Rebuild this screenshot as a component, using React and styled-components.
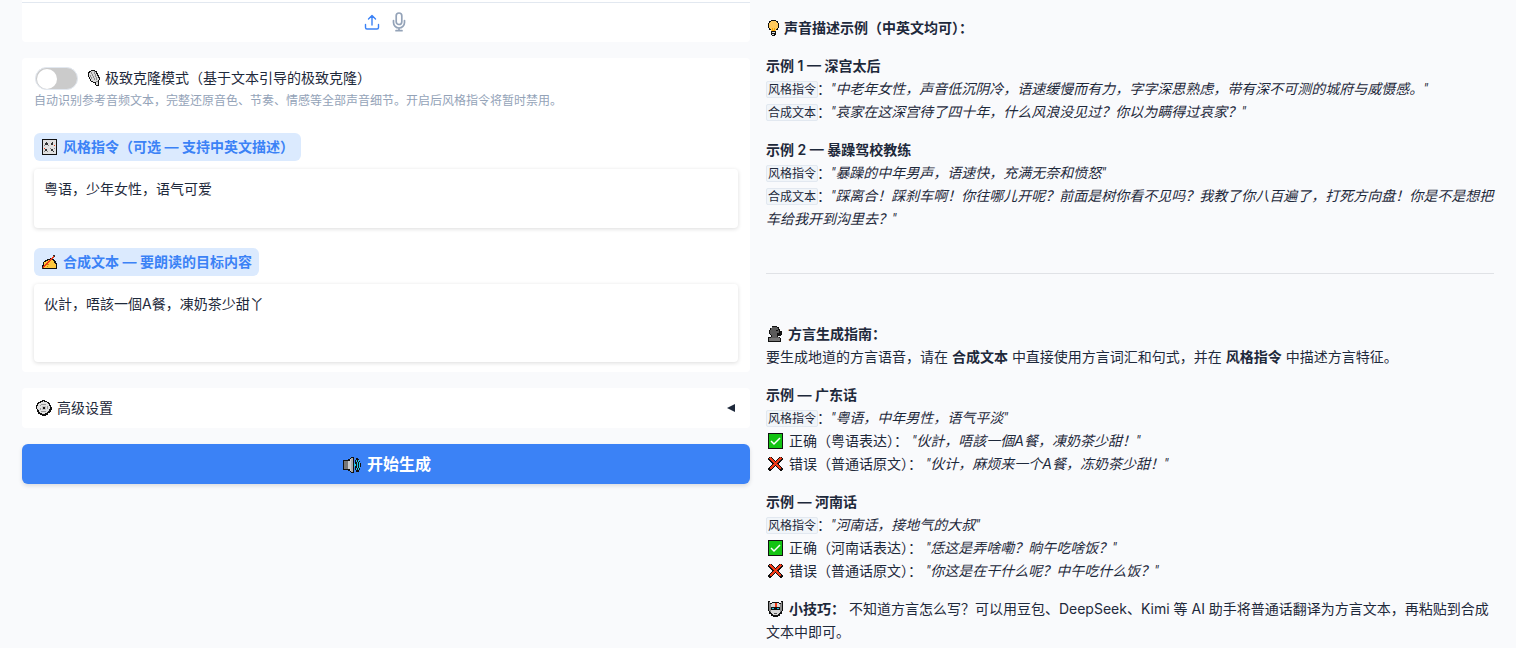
import React from 'react'
import styled, { createGlobalStyle } from 'styled-components'

const GlobalStyle = createGlobalStyle`
  * {
    box-sizing: border-box;
  }
  body {
    margin: 0;
    background: #f9fafc;
    color: #1e293b;
    font: 14px/23px Inter, 'Noto Sans CJK SC', sans-serif;
  }
`

const Page = styled.main`
  display: flex;
  align-items: flex-start;
  gap: 16px;
  padding: 0 22px;
`

const Column = styled.div`
  flex: 1 1 0;
  min-width: 0;
  display: flex;
  flex-direction: column;
  gap: 16px;
`

const AudioPanel = styled.section`
  height: 42px;
  padding-top: 2px;
  background: #fff;
  border-radius: 0 0 4px 4px;
`

const SourceBar = styled.div`
  display: flex;
  justify-content: center;
  gap: 8px;
  padding: 9px 2px 0 0;
  border-top: 1px solid #e2e8f0;
`

const SourceButton = styled.button`
  display: flex;
  padding: 0;
  border: 0;
  background: none;
  color: ${(props) => (props.$active ? '#3b82f6' : '#94a3b8')};
  cursor: pointer;
`

const Group = styled.section`
  padding: 8px 12px 10px;
  background: #fff;
  border-radius: 4px;
`

const SwitchLabel = styled.label`
  display: flex;
  align-items: center;
  gap: 8px;
  height: 24px;
  padding-left: 1px;
  line-height: 24px;
`

const Switch = styled.input`
  appearance: none;
  width: 43px;
  height: 23px;
  margin: 0;
  padding: 1px;
  border: 1px solid #e2e8f0;
  border-radius: 12px;
  background: #cbcbcb;
  cursor: pointer;

  &::before {
    content: '';
    display: block;
    width: 20px;
    height: 20px;
    border-radius: 50%;
    background: #fff;
  }
  &:checked {
    background: #3b82f6;
  }
  &:checked::before {
    margin-left: 19px;
  }
`

const Hint = styled.p`
  margin: 1px 0 0;
  color: #94a3b8;
  font-size: 12px;
  line-height: 20px;
`

const Field = styled.div`
  padding-top: ${(props) => props.$space}px;
`

const FieldLabel = styled.label`
  display: block;
  width: fit-content;
  padding: 0 7px 0 8px;
  border-radius: 6px;
  background: #dbeafe;
  color: #3b82f6;
  font-weight: 600;
  line-height: 28px;
`

const TextBox = styled.textarea`
  display: block;
  width: 100%;
  height: ${(props) => props.$height}px;
  margin-top: 8px;
  padding: 8px 10px;
  border: 0;
  border-radius: 4px;
  background: #fff;
  box-shadow: 0 1px 4px rgba(0, 0, 0, 0.14);
  color: inherit;
  font: inherit;
  resize: none;
  outline: none;
`

const Accordion = styled.button`
  display: flex;
  align-items: center;
  justify-content: space-between;
  height: 40px;
  padding: 0 14px;
  border: 0;
  border-radius: 4px;
  background: #fff;
  color: inherit;
  font: inherit;
  line-height: 40px;
  cursor: pointer;
`

const Generate = styled.button`
  height: 40px;
  padding: 0;
  border: 0;
  border-radius: 6px;
  background: #3b82f6;
  box-shadow: 0 2px 4px rgba(0, 0, 0, 0.12);
  color: #fff;
  font: 600 16px/40px Inter, 'Noto Sans CJK SC', sans-serif;
  cursor: pointer;
`

const Guide = styled.article`
  flex: 1 1 0;
  min-width: 0;
  padding-top: 16px;
`

const Text = styled.p`
  margin: 0 0 15px;

  strong {
    font-weight: 600;
  }
`

const Code = styled.code`
  margin-right: -1px;
  padding: 0 1px;
  border: 1px solid #e2e8f0;
  border-radius: 2px;
  background: #f1f5f9;
  font: 12px/14px Inter, 'Noto Sans CJK SC', sans-serif;
`

const QuoteMark = styled.span`
  font-family: Roboto, sans-serif;
  line-height: 14px;
`

const Divider = styled.hr`
  height: 1px;
  margin: 43px 0 48px;
  border: 0;
  background: #e0e2e6;
`

const Glyph = styled.svg`
  width: ${(props) => props.$width || 16}px;
  height: 16px;
  margin: 0 ${(props) => props.$gap || 5}px 0 ${(props) => props.$start || 0}px;
  vertical-align: -3px;
  shape-rendering: crispEdges;
`

const UploadIcon = () => (
  <svg width="20" height="20" viewBox="0 0 20 20" fill="none" stroke="currentColor" strokeWidth="1.4" strokeLinecap="round" strokeLinejoin="round">
    <path d="M3.5 12.5v3a1.5 1.5 0 0 0 1.5 1.5h10a1.5 1.5 0 0 0 1.5-1.5v-3M6.5 7L10 3.5 13.5 7M10 4v9" />
  </svg>
)

const MicIcon = () => (
  <svg width="18" height="20" viewBox="0 0 18 20" fill="none" stroke="currentColor" strokeWidth="1.7" strokeLinecap="round">
    <rect x="6.2" y="1" width="5.6" height="11.5" rx="2.8" />
    <path d="M3.5 8.5v2a5.5 5.5 0 0 0 11 0v-2M9 16v2.5M6 18.7h6" />
  </svg>
)

const Studio = () => (
  <Glyph $width={12} $start={2} viewBox="0 0 12 16">
    <path d="M3 0h4v1h2v2h1v2h1v2h1v3h-1v6H8v-1H7v-2H5v-1H3v-1H2V9H1V7H0V2h1V1h2z" fill="#111" />
    <path d="M3 1h4v1h1v2h1v2h1v2h1v2h-1v5H8v-3H5v-1H3V9H2V7H1V3h1V2h1z" fill="#d8d8d8" />
    <path d="M3 2h1v2h1v2h1v2h1v2H6V8H5V6H4V4H3zM6 1h1v3h1v3h1v3H8V7H7V4H6zM2 5h1v2h1v2H3V7H2zM8 11h2v1H8z" fill="#8a8a8a" />
  </Glyph>
)

const Knobs = () => (
  <Glyph viewBox="0 0 15 16" $width={15} $gap={6}>
    <path d="M0 0h15v16H0z" fill="#111" />
    <path d="M1 1h13v14H1z" fill="#e0e0e0" />
    <path d="M3 4h3v2H3zM4 3h1v1H4zM9 4h2v2H9zM10 3h1v1h-1zM3 10h2v2H3zM9 10h2v2H9zM11 12h1v1h-1z" fill="#333" />
    <path d="M12 6h1v1h-1zM2 9h1v1H2z" fill="#f03a17" />
    <path d="M2 6h1v1H2zM6 6h1v1H6zM2 12h1v1H2zM5 12h1v1H5zM8 9h1v1H8zM12 9h1v1h-1z" fill="#888" />
  </Glyph>
)

const Writing = () => (
  <Glyph viewBox="0 0 15 16" $width={15} $gap={6}>
    <path d="M1 11V8h1V7h1V6h2V5h3V4h2v1h2v1h1v1h1v2h1v6H0v-4z" fill="#111" />
    <path d="M2 12V8h2V7h2V6h5v1h1v2h1v1h1v4H2z" fill="#ffc83d" />
    <path d="M4 10h3v1H4zM5 12h1v1H5z" fill="#d67d00" />
    <path d="M1 12h1v-1h1v-1h1V9h1V8h1V7h1V6h1V5h1V4h1V3h1V2h1v2h-1v1h-1v1H9v1H8v1H7v1H6v1H5v1H4v1H3v1H2v1H1z" fill="#f03a17" />
    <path d="M0 13h1v2H0zM11 1h2v1h-2zM12 2h1v1h-1z" fill="#333" />
  </Glyph>
)

const Gear = () => (
  <Glyph viewBox="0 0 16 16">
    <path d="M4 1h2V0h3v1h2v1h2v1h1v2h1v2h1v3h-1v2h-1v1h-2v2h-2v1H6v-1H4v-1H2v-2H1V9H0V5h1V3h1V2h2z" fill="#111" />
    <path d="M5 2h2V1h1v1h3v1h1v1h1v2h1v3h-1v2h-1v1h-1v1H9v1H6v-1H4v-1H3v-2H2V9H1V6h1V4h1V3h2z" fill="#e0e0e0" />
    <path d="M5 4h5v1H5zM4 5h1v1H4zM4 8h1v2H4zM11 6h1v3h-1zM5 11h5v1H5z" fill="#999" />
    <path d="M6 6h4v4H6z" fill="#c4c4c4" />
    <path d="M7 7h2v2H7z" fill="#111" />
  </Glyph>
)

const Speaker = () => (
  <Glyph $width={18} $start={2} $gap={6} viewBox="0 0 18 16">
    <path d="M0 3h5V2h2V1h1V0h3v16H8v-1H7v-1H5v-1H0z" fill="#111" />
    <path d="M1 4h4v8H1z" fill="#777" />
    <path d="M5 4h2V2h1v12H7v-2H5z" fill="#ccc" />
    <path d="M8 1h2v14H8z" fill="#aaa" />
    <path d="M13 1h2v1h1v2h1v2h1v4h-1v3h-1v2h-3v-2h-1V3h1z" fill="#111" />
    <path d="M13 3h1v2h1v6h-1v2h-1v-2h1V5h-1zM11 6h1v1h1v2h-1v1h-1zM15 3h1v2h1v6h-1v2h-1v-2h1V5h-1z" fill="#26c6e8" />
  </Glyph>
)

const Bulb = () => (
  <Glyph $width={12} $start={2} $gap={4} viewBox="0 0 12 16">
    <path d="M3 0h5v1h2v2h1v5h-1v2H8v5H7v1H4v-1H3v-5H1V8H0V3h1V1h2z" fill="#111" />
    <path d="M3 1h5v1h1v1h1v5H9v1H8v2H3V9H2V8H1V3h1V2h1z" fill="#ffc95c" />
    <path d="M4 8h1v2h1V8h1v3H4z" fill="#f6a500" />
    <path d="M4 12h3v1H4zM4 14h2v1H4z" fill="#ddd" />
  </Glyph>
)

const Speaking = () => (
  <Glyph $start={2} $gap={4} viewBox="0 0 16 16">
    <path d="M4 0h5v1h2v2h1v2h2v4h-1v1h-3v1h2v1h1v4H0v-5h3V9H2V8H1V4h1V2h2z" fill="#111" />
    <path d="M4 1h5v1h1v2h1v4h-2v3h2v2H3v-2h1V9H3V8H2V4h1V2h1z" fill="#5b5b5b" />
    <path d="M1 12h11v3H1z" fill="#777" />
    <path d="M8 4h2v1H8zM9 7h3v1H9z" fill="#111" />
  </Glyph>
)

const Check = () => (
  <Glyph $start={2} viewBox="0 0 16 16">
    <path d="M0 0h15v16H0z" fill="#111" />
    <path d="M1 1h13v14H1z" fill="#13c313" />
    <path d="M3 8l3 3 6-6" fill="none" stroke="#fff" strokeWidth="1.5" shapeRendering="auto" />
  </Glyph>
)

const Cross = () => (
  <Glyph $start={2} viewBox="0 0 16 16">
    <path d="M1 1h3v1h1v1h1v1h1v1h1V4h1V3h1V2h1V1h3v1h1v2h-1v1h-1v1h-1v1h-1v2h1v1h1v1h1v1h1v2h-1v1h-2v-1h-1v-1h-1v-1H9v-1H8v-1H7v1H6v1H5v1H4v1H3v1H1v-1H0v-2h1v-1h1v-1h1v-1h1V8H4V7H3V6H2V5H1V4H0V2h1z" fill="#111" />
    <path d="M2 2l11 11M13 2L2 13" stroke="#f03a17" strokeWidth="2.6" />
  </Glyph>
)

const Robot = () => (
  <Glyph $start={2} viewBox="0 0 16 16">
    <path d="M0 0h2v2h2V1h7v1h2V0h2v10h-1v3h-2v2h-2v1H5v-1H3v-2H1v-3H0z" fill="#111" />
    <path d="M1 1h1v9H1zM13 1h1v9h-1zM2 3h1v8H2zM12 3h1v8h-1z" fill="#8a8a8a" />
    <path d="M4 2h7v1h1v3H3V3h1zM3 9h9v3h-1v1h-1v1H5v-1H4v-1H3z" fill="#d8d8d8" />
    <path d="M4 7h2v1H4zM9 7h2v1H9z" fill="#26c6e8" />
    <path d="M7 2h2v4H7z" fill="#f03a17" />
    <path d="M6 12h3v1H6z" fill="#555" />
  </Glyph>
)

const Arrow = () => (
  <svg width="10" height="10" viewBox="0 0 10 10">
    <path d="M1 5l8-4v8z" fill="currentColor" />
  </svg>
)

const Quote = ({ children }) => (
  <em>
    <QuoteMark>"</QuoteMark>{children}<QuoteMark>"</QuoteMark>
  </em>
)

export default function App() {
  return (
    <>
      <GlobalStyle />
      <Page>
        <Column>
          <AudioPanel>
            <SourceBar>
              <SourceButton $active aria-label="上传"><UploadIcon /></SourceButton>
              <SourceButton aria-label="录音"><MicIcon /></SourceButton>
            </SourceBar>
          </AudioPanel>

          <Group>
            <SwitchLabel>
              <Switch type="checkbox" />
              <span><Studio />极致克隆模式（基于文本引导的极致克隆）</span>
            </SwitchLabel>
            <Hint>自动识别参考音频文本，完整还原音色、节奏、情感等全部声音细节。开启后风格指令将暂时禁用。</Hint>
            <Field $space={22}>
              <FieldLabel htmlFor="style"><Knobs />风格指令（可选 — 支持中英文描述）</FieldLabel>
              <TextBox id="style" $height={59} defaultValue="粤语，少年女性，语气可爱" />
            </Field>
            <Field $space={20}>
              <FieldLabel htmlFor="target"><Writing />合成文本 — 要朗读的目标内容</FieldLabel>
              <TextBox id="target" $height={78} defaultValue="伙計，唔該一個A餐，凍奶茶少甜丫" />
            </Field>
          </Group>

          <Accordion aria-expanded="false">
            <span><Gear />高级设置</span>
            <Arrow />
          </Accordion>

          <Generate><Speaker />开始生成</Generate>
        </Column>

        <Guide>
          <Text><Bulb /><strong>声音描述示例（中英文均可）：</strong></Text>
          <Text>
            <strong>示例 1 — 深宫太后</strong><br />
            <Code>风格指令</Code>：<Quote>中老年女性，声音低沉阴冷，语速缓慢而有力，字字深思熟虑，带有深不可测的城府与威慑感。</Quote><br />
            <Code>合成文本</Code>：<Quote>哀家在这深宫待了四十年，什么风浪没见过？你以为瞒得过哀家？</Quote>
          </Text>
          <Text>
            <strong>示例 2 — 暴躁驾校教练</strong><br />
            <Code>风格指令</Code>：<Quote>暴躁的中年男声，语速快，充满无奈和愤怒</Quote><br />
            <Code>合成文本</Code>：<Quote>踩离合！踩刹车啊！你往哪儿开呢？前面是树你看不见吗？我教了你八百遍了，打死方向盘！你是不是想把车给我开到沟里去？</Quote>
          </Text>
          <Divider />
          <Text>
            <Speaking /><strong>方言生成指南：</strong><br />
            要生成地道的方言语音，请在 <strong>合成文本</strong> 中直接使用方言词汇和句式，并在 <strong>风格指令</strong> 中描述方言特征。
          </Text>
          <Text>
            <strong>示例 — 广东话</strong><br />
            <Code>风格指令</Code>：<Quote>粤语，中年男性，语气平淡</Quote><br />
            <Check />正确（粤语表达）： <Quote>伙計，唔該一個A餐，凍奶茶少甜！</Quote><br />
            <Cross />错误（普通话原文）： <Quote>伙计，麻烦来一个A餐，冻奶茶少甜！</Quote>
          </Text>
          <Text>
            <strong>示例 — 河南话</strong><br />
            <Code>风格指令</Code>：<Quote>河南话，接地气的大叔</Quote><br />
            <Check />正确（河南话表达）： <Quote>恁这是弄啥嘞？晌午吃啥饭？</Quote><br />
            <Cross />错误（普通话原文）： <Quote>你这是在干什么呢？中午吃什么饭？</Quote>
          </Text>
          <Text>
            <Robot /><strong>小技巧：</strong> 不知道方言怎么写？可以用豆包、DeepSeek、Kimi 等 AI 助手将普通话翻译为方言文本，再粘贴到合成文本中即可。
          </Text>
        </Guide>
      </Page>
    </>
  )
}
